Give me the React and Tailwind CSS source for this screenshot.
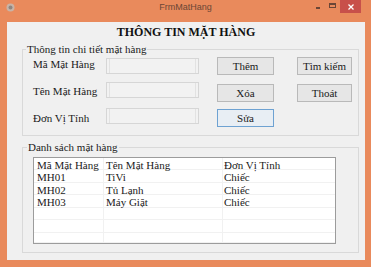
import React from 'react';

const rows = [
  ['Mã Mặt Hàng', 'Tên Mặt Hàng', 'Đơn Vị Tính'],
  ['MH01', 'TiVi', 'Chiếc'],
  ['MH02', 'Tủ Lạnh', 'Chiếc'],
  ['MH03', 'Máy Giặt', 'Chiếc'],
  ['', '', ''],
  ['', '', ''],
  ['', '', ''],
];

const rowHeights = ['h-[12px]', 'h-[13px]', 'h-[12px]', 'h-[13px]', 'h-[12px]', 'h-[13px]', 'h-[10px]'];

function TextBox() {
  return (
    <div className="w-[93px] h-[16px] border border-[#d6d6d6] bg-[#f2f2f2] flex">
      <div className="flex-1 mx-[2px] border-x border-[#e2e2e2]" />
    </div>
  );
}

function Btn({ children, focused }) {
  return (
    <button
      className={`h-[18px] w-full border font-['Liberation_Serif','Times_New_Roman',serif] text-[11px] leading-none text-[#1a1a1a] ${
        focused ? 'border-[#6ea2d2] bg-[#e8eef4]' : 'border-[#b9b9b9] bg-[#e6e6e6]'
      }`}
    >
      {children}
    </button>
  );
}

export default function App() {
  return (
    <div className="w-[371px] h-[267px] bg-[#e98a5c] flex flex-col overflow-hidden font-['Liberation_Serif','Times_New_Roman',serif] text-[11px] text-[#1a1a1a]">
      {/* Title bar */}
      <div className="h-[22px] grid grid-cols-[1fr_auto_1fr] items-start">
        <div className="pl-[6px] pt-[3px]">
          <svg width="9" height="9" viewBox="0 0 9 9">
            <circle cx="4.5" cy="4.5" r="4" fill="#c9b3a6" />
            <circle cx="4.5" cy="4.5" r="2" fill="#8f8680" />
          </svg>
        </div>
        <div className="pt-[2px] text-[9px] leading-[11px] text-[#6b4636] font-['Liberation_Sans',Arial,sans-serif]">
          FrmMatHang
        </div>
        <div className="flex justify-end items-start pr-[10px]">
          <div className="mt-[7px] w-[4px] h-[2px] bg-[#6b4636]" />
          <div className="ml-[9px] mt-[3px] w-[7px] h-[5px] border border-[#6b4636] border-t-2" />
          <div className="ml-[4px] w-[21px] h-[13px] bg-[#c8504a] flex items-center justify-center">
            <svg width="6" height="6" viewBox="0 0 6 6">
              <path d="M0.5 0.5 L5.5 5.5 M5.5 0.5 L0.5 5.5" stroke="#fff" strokeWidth="1.3" />
            </svg>
          </div>
        </div>
      </div>

      {/* Client area */}
      <div className="flex-1 ml-[7px] mr-[6px] mb-[7px] bg-[#f0f0f0] flex flex-col pl-[15px] pr-[6px]">
        <div className="h-[20px] -ml-[15px] -mr-[6px] text-center font-bold text-[12px] leading-[20px] text-[#111]">
          THÔNG TIN MẶT HÀNG
        </div>

        {/* Group: details */}
        <fieldset className="h-[94px] border border-[#d9d9d9]">
          <legend className="ml-[3px] px-[1px] leading-[14px]">Thông tin chi tiết mặt hàng</legend>
          <div className="flex pl-[10px]">
            <div className="w-[166px] flex flex-col">
              <div className="mt-[2px] flex items-start">
                <span className="w-[73px] -mt-[1px] leading-[14px]">Mã Mặt Hàng</span>
                <TextBox />
              </div>
              <div className="mt-[8px] flex items-start">
                <span className="w-[73px] mt-[2px] leading-[14px]">Tên Mặt Hàng</span>
                <TextBox />
              </div>
              <div className="mt-[10px] flex items-start">
                <span className="w-[73px] mt-[3px] leading-[14px]">Đơn Vị Tính</span>
                <TextBox />
              </div>
            </div>
            <div className="ml-[18px] mt-[1px] grid grid-cols-[57px_55px] gap-x-[23px] content-start">
              <Btn>Thêm</Btn>
              <Btn>Tìm kiếm</Btn>
              <div className="mt-[9px]"><Btn>Xóa</Btn></div>
              <div className="mt-[9px]"><Btn>Thoát</Btn></div>
              <div className="mt-[7px]"><Btn focused>Sửa</Btn></div>
            </div>
          </div>
        </fieldset>

        {/* Group: list */}
        <fieldset className="mt-[4px] h-[113px] border border-[#d9d9d9]">
          <legend className="ml-[4px] px-[1px] leading-[14px]">Danh sách mặt hàng</legend>
          <div className="mt-[3px] ml-[10px] w-[303px] h-[87px] border border-[#9c9c9c] bg-white overflow-hidden">
            {rows.map((r, i) => (
              <div key={i} className={`flex border-b border-[#f1f1f1] ${rowHeights[i]}`}>
                <div className="w-[70px] pl-[3px] border-r border-[#f1f1f1] leading-[12px] pt-[1px]">{r[0]}</div>
                <div className="w-[119px] pl-[2px] border-r border-[#f1f1f1] leading-[12px] pt-[1px]">{r[1]}</div>
                <div className="flex-1 pl-[1px] leading-[12px] pt-[1px]">{r[2]}</div>
              </div>
            ))}
          </div>
        </fieldset>
      </div>
    </div>
  );
}
